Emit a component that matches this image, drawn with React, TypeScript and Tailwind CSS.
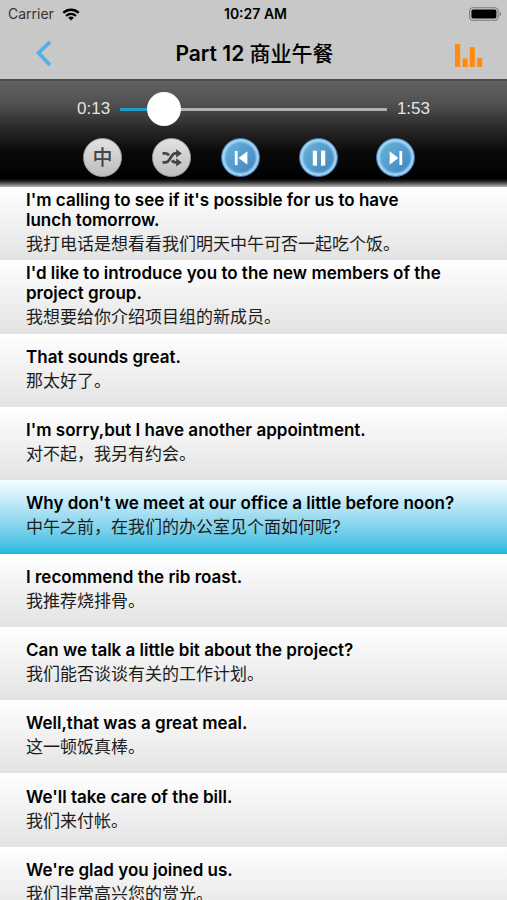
import React, { useState } from "react";
import clsx from "clsx";

interface Sentence {
  en: string;
  zh: string;
}

const sentences: Sentence[] = [
  {
    en: "I'm calling to see if it's possible for us to have lunch\u00a0tomorrow.",
    zh: "我打电话是想看看我们明天中午可否一起吃个饭。",
  },
  {
    en: "I'd like to introduce you to the new members of the project group.",
    zh: "我想要给你介绍项目组的新成员。",
  },
  { en: "That sounds great.", zh: "那太好了。" },
  { en: "I'm sorry,but I have another appointment.", zh: "对不起，我另有约会。" },
  {
    en: "Why don't we meet at our office a little before noon?",
    zh: "中午之前，在我们的办公室见个面如何呢?",
  },
  { en: "I recommend the rib roast.", zh: "我推荐烧排骨。" },
  {
    en: "Can we talk a little bit about the project?",
    zh: "我们能否谈谈有关的工作计划。",
  },
  { en: "Well,that was a great meal.", zh: "这一顿饭真棒。" },
  { en: "We'll take care of the bill.", zh: "我们来付帐。" },
  { en: "We're glad you joined us.", zh: "我们非常高兴您的赏光。" },
];

const DURATION = 113;

function formatTime(seconds: number) {
  return `${Math.floor(seconds / 60)}:${String(seconds % 60).padStart(2, "0")}`;
}

function StatusBar() {
  return (
    <div className="grid grid-cols-3 items-center h-7 pl-2 pr-1 text-sm text-black">
      <div className="flex items-center gap-2 text-[#333]">
        <span>Carrier</span>
        <svg width="18" height="13" viewBox="0 0 18 13" fill="none">
          <path d="M1.3 4.9a11 11 0 0 1 15.4 0" stroke="#000" strokeWidth="2.3" />
          <path d="M4.1 7.9a7 7 0 0 1 9.8 0" stroke="#000" strokeWidth="2.1" />
          <path d="M9 12.6 6.2 9.8a4 4 0 0 1 5.6 0z" fill="#000" />
        </svg>
      </div>
      <span className="text-center font-semibold whitespace-nowrap">10:27 AM</span>
      <svg className="justify-self-end" width="34" height="14" viewBox="0 0 34 14">
        <rect x="0.6" y="0.7" width="28.6" height="12.6" rx="3.6" fill="none" stroke="#7b7b7b" strokeWidth="1.1" />
        <rect x="2.4" y="2.4" width="25" height="9.2" rx="1.8" fill="#000" />
        <path d="M30.6 4.8c1.8.5 1.8 3.9 0 4.4z" fill="#7b7b7b" />
      </svg>
    </div>
  );
}

function NavBar() {
  return (
    <div className="grid grid-cols-[1fr_auto_1fr] items-center h-[51px] pl-7 pr-[22px]">
      <button aria-label="Back" className="flex w-8 h-8 items-center justify-center">
        <svg width="16" height="26" viewBox="0 0 16 26" fill="none">
          <path d="M14 0.8 2.6 12 14 24" stroke="#56aee6" strokeWidth="3.8" />
        </svg>
      </button>
      <h1 className="pr-1 text-[21px] leading-6 font-semibold text-black">
        Part 12 <span className="font-medium">商业午餐</span>
      </h1>
      <button aria-label="Statistics" className="flex w-8 h-8 items-end justify-center justify-self-end">
        <svg width="28" height="28" viewBox="0 0 28 28" fill="#ff8a0c">
          <rect x="0" y="2" width="5.2" height="23" />
          <rect x="7.6" y="16.4" width="5" height="8.6" />
          <rect x="14.8" y="5.2" width="5" height="19.8" />
          <rect x="22.2" y="16" width="5" height="9" />
        </svg>
      </button>
    </div>
  );
}

interface RoundButtonProps {
  label: string;
  tone: "gray" | "blue";
  onClick?: () => void;
  children: React.ReactNode;
}

function RoundButton({ label, tone, onClick, children }: RoundButtonProps) {
  return (
    <button
      aria-label={label}
      onClick={onClick}
      className={clsx(
        "flex items-center justify-center w-[39px] h-[39px] rounded-full",
        tone === "gray" && "bg-linear-to-b from-[#e2e2e2] to-[#bdbdbd] border border-[#a2a2a2] text-[#444]",
        tone === "blue" &&
          "bg-linear-to-br from-[#6cb9dc] to-[#3c7fbb] border border-[#4a80b8] text-white shadow-[inset_0_0_2px_3px_#a5d3f4]"
      )}
    >
      {children}
    </button>
  );
}

function Player() {
  const [time, setTime] = useState(13);
  const [playing, setPlaying] = useState(true);
  const percent = (time / DURATION) * 100;

  return (
    <div className="h-[108px] border-t-2 border-[#4c4c4c] bg-[linear-gradient(to_bottom,#626262_0%,#505050_22%,#2a2a2a_44%,#0a0a0a_66%,#000_92%,#2e2e2e_95%,#b4b4b4_100%)]">
      <div className="flex items-center gap-[10px] pt-[11px] px-[77px] text-[17px] text-[#e4e4e4] font-['Liberation_Sans',sans-serif]">
        <span>{formatTime(time)}</span>
        <input
          type="range"
          aria-label="Position"
          min={0}
          max={DURATION}
          value={time}
          onChange={(e) => setTime(Number(e.target.value))}
          style={{
            backgroundImage: `linear-gradient(to right, #1f9bcb ${percent}%, #b2b2b2 ${percent}%)`,
          }}
          className="flex-1 min-w-0 h-[34px] appearance-none bg-transparent bg-no-repeat bg-center bg-size-[100%_3px] [&::-webkit-slider-thumb]:appearance-none [&::-webkit-slider-thumb]:w-[34px] [&::-webkit-slider-thumb]:h-[34px] [&::-webkit-slider-thumb]:rounded-full [&::-webkit-slider-thumb]:bg-white"
        />
        <span>{formatTime(DURATION)}</span>
      </div>
      <div className="flex justify-between pt-3 pl-[83px] pr-[92px]">
        <div className="flex gap-[30px]">
          <RoundButton label="Show Chinese" tone="gray">
            <span className="text-[20px] leading-5 font-medium">中</span>
          </RoundButton>
          <RoundButton label="Shuffle" tone="gray">
            <svg width="20" height="18" viewBox="0 0 20 18" fill="none" stroke="currentColor" strokeWidth="2.8">
              <path d="M0.5 4.4h3.2c1.6 0 2.4.8 3.2 2" />
              <path d="M0.5 13.4h3c5 0 5-9 10-9h2" />
              <path d="M10 11.4c.9 1.3 1.9 2 3.5 2h2" />
              <path d="M14.2 0.2 19.8 4.4 14.2 8.6z" fill="currentColor" stroke="none" />
              <path d="M14.2 9.2 19.8 13.4 14.2 17.6z" fill="currentColor" stroke="none" />
            </svg>
          </RoundButton>
          <RoundButton label="Previous" tone="blue">
            <svg width="14" height="16" viewBox="0 0 14 16" fill="currentColor">
              <rect x="0.8" y="1" width="2.8" height="14" />
              <path d="M13.4 1.2v13.6L4.6 8z" />
            </svg>
          </RoundButton>
        </div>
        <div className="flex gap-[38px]">
          <RoundButton label={playing ? "Pause" : "Play"} tone="blue" onClick={() => setPlaying(!playing)}>
            <svg width="14" height="16" viewBox="0 0 14 16" fill="currentColor">
              {playing ? (
                <>
                  <rect x="0.8" y="0.6" width="4.2" height="15" />
                  <rect x="9" y="0.6" width="4.2" height="15" />
                </>
              ) : (
                <path d="M2 1v14l11-7z" />
              )}
            </svg>
          </RoundButton>
          <RoundButton label="Next" tone="blue">
            <svg width="14" height="16" viewBox="0 0 14 16" fill="currentColor">
              <path d="M0.6 1.2v13.6L9.4 8z" />
              <rect x="10.4" y="1" width="2.8" height="14" />
            </svg>
          </RoundButton>
        </div>
      </div>
    </div>
  );
}

function App() {
  const [current, setCurrent] = useState(4);

  return (
    <div className="flex flex-col h-screen bg-white font-[Inter,'Noto_Sans_CJK_SC',sans-serif]">
      <header className="bg-[#c8c8c8]">
        <StatusBar />
        <NavBar />
      </header>
      <Player />
      <main className="flex-1 min-h-0 overflow-y-auto [scrollbar-width:none]">
        <ul className="grid auto-rows-fr min-h-[733px]">
          {sentences.map((item, index) => (
            <li key={item.en} className="flex">
              <button
                onClick={() => setCurrent(index)}
                className={clsx(
                  "flex flex-col justify-center gap-1 w-full pl-[26px] pr-12 pb-[3px] text-left text-black",
                  index === current
                    ? "bg-linear-to-b from-[#f4fdff] to-[#12b9e0]"
                    : "bg-linear-to-b from-white to-[#e3e3e3]"
                )}
              >
                <span className="text-[17px] leading-5 font-semibold">{item.en}</span>
                <span className="text-[17px] leading-5 text-[#1c1c1c]">{item.zh}</span>
              </button>
            </li>
          ))}
        </ul>
      </main>
    </div>
  );
}

export default App;
